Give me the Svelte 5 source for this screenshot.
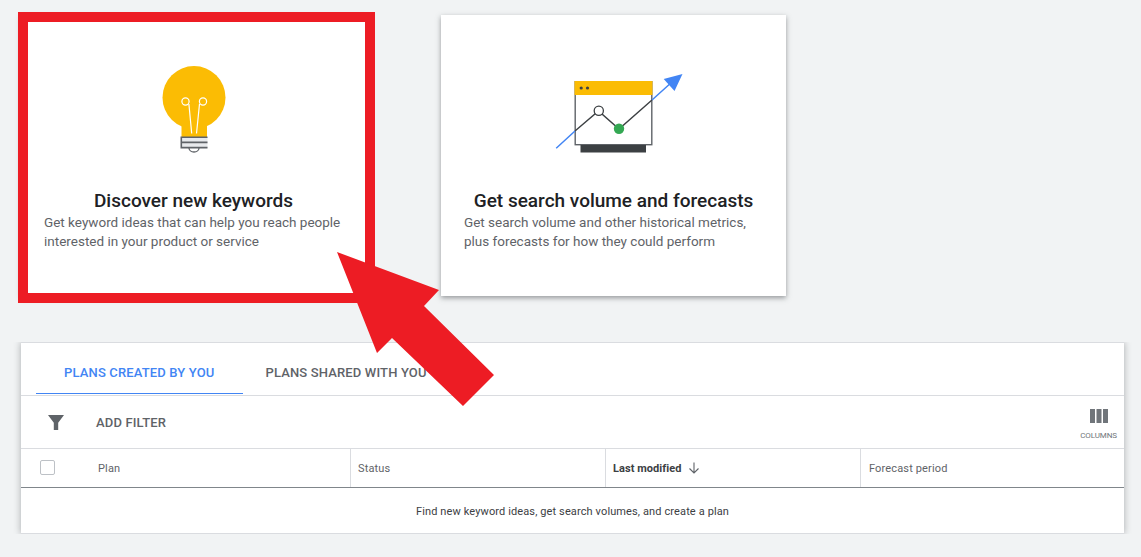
<script>
  const columns = [
    { label: "Plan", width: 329, pad: 77 },
    { label: "Status", width: 255, pad: 7 },
    { label: "Last modified", width: 255, pad: 7, sorted: true },
    { label: "Forecast period", width: 0, pad: 8 },
  ];
</script>

<main class="page">
  <section class="cards">
    <article class="card">
      <div class="illustration">
        <svg width="140" height="100" viewBox="123.5 60 140 100">
          <circle cx="193.5" cy="97.5" r="31.5" fill="#fbbc04" />
          <rect x="181" y="118" width="25.5" height="19" fill="#fbbc04" />
          <g fill="none" stroke="#fff" stroke-width="1.2">
            <circle cx="185" cy="101.5" r="3.6" />
            <circle cx="202.5" cy="101.5" r="3.6" />
            <path d="M188.4 104 191.2 133.5M199 104 196 133.5" />
          </g>
          <path d="M181 137h26v11h-26z" fill="#e8eaed" />
          <path d="M207 137.2h-26.2v10.4H207M181 142.4h26" fill="none" stroke="#5f6368" stroke-width="1.6" />
          <path d="M188.5 148a5 4 0 0 0 10 0" fill="none" stroke="#5f6368" stroke-width="1.3" />
        </svg>
      </div>
      <h2>Discover new keywords</h2>
      <p>Get keyword ideas that can help you reach people interested in your product or service</p>
    </article>

    <article class="card">
      <div class="illustration">
        <svg width="140" height="100" viewBox="543.5 60 140 100">
          <rect x="574.7" y="81.7" width="76.6" height="63" fill="#fff" stroke="#5f6368" stroke-width="1.4" />
          <rect x="574" y="81" width="78" height="14" fill="#fbbc04" />
          <circle cx="580.7" cy="88" r="1.6" fill="#3c4043" />
          <circle cx="587" cy="88" r="1.6" fill="#3c4043" />
          <rect x="580" y="145" width="65.5" height="7.5" fill="#3c4043" />
          <path d="M555.7 148.3 574.5 131M651.5 100 672 81.5" fill="none" stroke="#4285f4" stroke-width="1.5" />
          <path d="M682 74 663.2 79 674 91z" fill="#4285f4" />
          <path d="M574.5 131 598 111 618.5 129 651.5 100" fill="none" stroke="#3c4043" stroke-width="1.4" />
          <circle cx="598.3" cy="110.7" r="4.6" fill="#fff" stroke="#3c4043" stroke-width="1.3" />
          <circle cx="618.5" cy="128.7" r="5.2" fill="#34a853" />
        </svg>
      </div>
      <h2>Get search volume and forecasts</h2>
      <p>Get search volume and other historical metrics, plus forecasts for how they could perform</p>
    </article>
  </section>

  <section class="plans">
    <div class="tabs">
      <button class="tab active">PLANS CREATED BY YOU</button>
      <button class="tab">PLANS SHARED WITH YOU</button>
    </div>

    <div class="filter-bar">
      <svg class="funnel" width="16" height="15" viewBox="0 0 16 15">
        <path d="M0 0h16L10.2 7.8V15H5.8V7.8z" fill="#5f6368" />
      </svg>
      <span class="add-filter">ADD FILTER</span>
      <div class="columns-btn">
        <svg width="18" height="14" viewBox="0 0 18 14">
          <path d="M0 0h5v14H0zM6.5 0h5v14h-5zM13 0h5v14h-5z" fill="#70757a" />
        </svg>
        <span>COLUMNS</span>
      </div>
    </div>

    <div class="table-head">
      <span class="check"></span>
      {#each columns as col}
        <div
          class="th"
          class:sorted={col.sorted}
          style="padding-left: {col.pad}px; {col.width ? `width: ${col.width}px` : 'flex: 1'}"
        >
          {col.label}
          {#if col.sorted}
            <svg class="arrow-down" width="12" height="12" viewBox="0 0 12 12">
              <path d="M6 0.5V11M1.5 6.5 6 11l4.5-4.5" fill="none" stroke="#5f6368" stroke-width="1.1" />
            </svg>
          {/if}
        </div>
      {/each}
    </div>

    <div class="empty">Find new keyword ideas, get search volumes, and create a plan</div>
  </section>

  <!-- annotation drawn on top of the screenshot -->
  <div class="highlight"></div>
  <svg class="pointer" width="170" height="165" viewBox="330 245 170 165">
    <path d="M337 252 439 290 424 306 494 375 463 406 392 338 377 353z" fill="#ed1c24" />
  </svg>
</main>

<style>
  :global(body) {
    margin: 0;
    background: #f1f3f4;
  }

  .page {
    position: relative;
    width: 1141px;
    height: 557px;
    box-sizing: border-box;
    padding: 15px 17px 0 21px;
    font-family: Roboto, "Liberation Sans", sans-serif;
    overflow: hidden;
  }

  .cards {
    display: flex;
    gap: 75px;
  }

  .card {
    width: 345px;
    height: 281px;
    box-sizing: border-box;
    padding: 45px 23px 0;
    background: #fff;
    box-shadow: 0 2px 5px rgba(60, 64, 67, 0.5);
  }

  .illustration {
    display: flex;
    justify-content: center;
    height: 100px;
    margin-bottom: 30px;
  }

  h2 {
    margin: 0;
    font-size: 19px;
    line-height: 22px;
    font-weight: 500;
    text-align: center;
    color: #202124;
  }

  p {
    margin: 1px 0 0;
    font-size: 13.5px;
    line-height: 19px;
    color: #5f6368;
  }

  .plans {
    margin-top: 46px;
    background: #fff;
    border-top: 1px solid #dadce0;
    border-bottom: 1px solid #dadce0;
    box-shadow: 0 0 7px rgba(60, 64, 67, 0.4);
    clip-path: inset(0 -12px 0 -12px);
  }

  .tabs {
    display: flex;
    height: 52px;
    padding-left: 15px;
    border-bottom: 1px solid #dadce0;
  }

  .tab {
    all: unset;
    box-sizing: border-box;
    height: 51px;
    padding: 8px 22px 0;
    border-bottom: 1px solid transparent;
    font-size: 13px;
    font-weight: 500;
    letter-spacing: 0.15px;
    color: #5f6368;
  }

  .tab.active {
    padding: 8px 29px 0 28px;
    color: #4285f4;
    border-bottom-color: #4285f4;
  }

  .filter-bar {
    display: flex;
    align-items: center;
    height: 52px;
    padding-left: 27px;
    border-bottom: 1px solid #dadce0;
  }

  .add-filter {
    margin-left: 32px;
    font-size: 13px;
    font-weight: 500;
    letter-spacing: 0.15px;
    color: #5f6368;
  }

  .columns-btn {
    margin-left: auto;
    margin-right: 7px;
    padding-top: 5px;
    display: flex;
    flex-direction: column;
    align-items: center;
    gap: 8px;
    font-size: 8px;
    letter-spacing: -0.1px;
    color: #70757a;
  }

  .table-head {
    position: relative;
    display: flex;
    height: 38px;
    border-bottom: 1px solid #80868b;
  }

  .check {
    position: absolute;
    left: 19px;
    top: 11px;
    width: 13px;
    height: 13px;
    border: 1px solid #bdc1c6;
    border-radius: 2px;
  }

  .th {
    display: flex;
    align-items: center;
    box-sizing: border-box;
    height: 38px;
    font-size: 11px;
    font-weight: 400;
    letter-spacing: 0.15px;
    color: #5f6368;
    border-left: 1px solid #dadce0;
  }

  .th:first-of-type {
    border-left: none;
  }

  .th.sorted {
    font-weight: 700;
    letter-spacing: 0.05px;
    color: #3c4043;
  }

  .arrow-down {
    margin-left: 7px;
  }

  .empty {
    height: 44px;
    padding-top: 1px;
    line-height: 45px;
    text-align: center;
    font-size: 11px;
    letter-spacing: 0.12px;
    color: #3c4043;
  }

  .highlight {
    position: absolute;
    left: 18px;
    top: 12px;
    width: 337px;
    height: 271px;
    border: 10px solid #ed1c24;
  }

  .pointer {
    position: absolute;
    left: 330px;
    top: 245px;
  }
</style>
